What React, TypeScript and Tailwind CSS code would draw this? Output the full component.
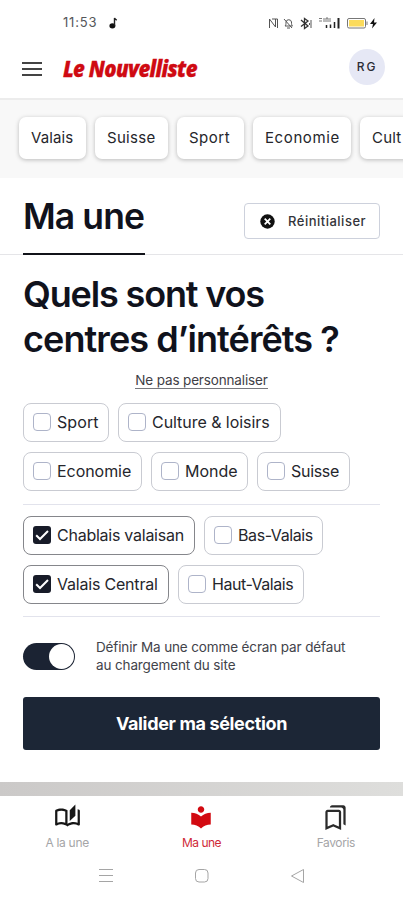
import React from 'react';
import clsx from 'clsx';
import { MdOutlineAutoStories, MdLocalLibrary, MdOutlineBookmarks } from 'react-icons/md';

interface Category {
  label: string;
  width: string;
  text: string;
}

interface TopicProps extends Category {
  checked?: boolean;
}

const categories: Category[] = [
  { label: 'Valais', width: 'w-[67px]', text: 'tracking-[0.1px]' },
  { label: 'Suisse', width: 'w-[73px]', text: 'tracking-[0.3px]' },
  { label: 'Sport', width: 'w-[67px]', text: 'tracking-[0.5px]' },
  { label: 'Economie', width: 'w-[98px]', text: 'tracking-[0.6px]' },
  { label: 'Cult', width: 'w-[56px]', text: 'tracking-[0.2px]' },
];

const topics: TopicProps[][] = [
  [
    { label: 'Sport', width: 'w-[86px]', text: 'tracking-[0.1px]' },
    { label: 'Culture & loisirs', width: 'w-[163px]', text: 'tracking-[-0.05px]' },
  ],
  [
    { label: 'Economie', width: 'w-[119px]', text: 'tracking-[-0.05px]' },
    { label: 'Monde', width: 'w-[97px]', text: '' },
    { label: 'Suisse', width: 'w-[93px]', text: 'tracking-[-0.3px]' },
  ],
];

const regions: TopicProps[][] = [
  [
    { label: 'Chablais valaisan', width: 'w-[172px]', text: 'tracking-[-0.25px]', checked: true },
    { label: 'Bas-Valais', width: 'w-[119px]', text: 'tracking-[-0.4px]' },
  ],
  [
    { label: 'Valais Central', width: 'w-[146px]', text: 'tracking-[-0.2px]', checked: true },
    { label: 'Haut-Valais', width: 'w-[126px]', text: 'tracking-[-0.45px]' },
  ],
];

const Topic: React.FC<TopicProps> = ({ label, width, text, checked = false }) => (
  <button
    className={clsx(
      'flex h-[39px] shrink-0 items-center gap-[6px] rounded-[8px] border pb-px pl-[9px] text-[16px] whitespace-nowrap text-[#25262c]',
      checked ? 'border-[#85868b]' : 'border-[#c9cbd2]',
      width,
    )}
  >
    {checked ? (
      <svg className="h-[18px] w-[18px] shrink-0" viewBox="0 0 18 18">
        <rect width="18" height="18" rx="3" fill="#171b28" />
        <path d="M3.2 9.300 7 13 15 5" fill="none" stroke="#fff" strokeWidth="2" />
      </svg>
    ) : (
      <span className="h-[18px] w-[18px] shrink-0 rounded-[4px] border border-[#aeb4c9] bg-white" />
    )}
    <span className={text}>{label}</span>
  </button>
);

const TopicRows: React.FC<{ rows: TopicProps[][] }> = ({ rows }) => (
  <div className="flex flex-col gap-[10px]">
    {rows.map((row, index) => (
      <div key={index} className="flex gap-[9px]">
        {row.map((topic) => (
          <Topic key={topic.label} {...topic} />
        ))}
      </div>
    ))}
  </div>
);

const StatusBar: React.FC = () => (
  <div className="flex h-[46px] items-center justify-between pr-[25px] pl-[63px]">
    <div className="flex items-center gap-[11px] text-[13px] text-[#55565a]">
      <span className="w-[35px] tracking-[0.8px] whitespace-nowrap">11:53</span>
      <svg width="9" height="12" viewBox="0 0 9 12">
        <ellipse cx="3.4" cy="8.8" rx="3" ry="2.6" fill="#111" />
        <path d="M5.500 8.800V1c.4 1.400 1.400 1.700 2.300 2.200" fill="none" stroke="#222" strokeWidth="1.4" />
      </svg>
    </div>
    <svg width="110" height="14" viewBox="268 16 110 14" fill="none" stroke="#555" strokeWidth="1">
      {/* nfc */}
      <path d="M269.500 28v-9l6 8v-8M272 19h5.500v9" />
      {/* cloche */}
      <path d="M285 26c1-1 1-2 1-4a2.800 2.800 0 0 1 5.500 0c0 2 0 3 1 4zM287 28h3M284 19l8 9" />
      {/* bluetooth */}
      <path d="m301 20 7 6-3.500 2.500v-10L308 21l-7 5.500" strokeWidth="1.300" stroke="#333" />
      <path d="M311 20v8M309.500 23v2" />
      <path d="M319 18.500h3M319 21h3M324 18v4M326 22v-4h2v4M330 18v4" strokeWidth=".8" />
      <path d="M326.500 25v3M330.500 24.500v3.500M334.500 22v6" stroke="#222" strokeWidth="1.500" />
      <path d="M338.500 18v10.500" stroke="#222" strokeWidth="2" />
      {/* batterie */}
      <rect x="347.500" y="18.500" width="18" height="9.500" rx="1.500" stroke="#777" />
      <rect x="349" y="20" width="15" height="6.500" fill="#fbdb5c" stroke="none" />
      <path d="M367 21.500v3.500" stroke="#777" />
      <path d="m374.500 18-4.500 6h3l-1 4.500 5-6h-3z" fill="#111" stroke="none" />
    </svg>
  </div>
);

const BottomNav: React.FC = () => (
  <nav className="grid h-[62px] grid-cols-3 bg-white text-center text-[12px] leading-[16px] text-[#a5a5a7]">
    <div className="flex flex-col items-center pt-[8px]">
      <MdOutlineAutoStories className="h-[27px] w-[27px] text-[#161616]" />
      <span className="mt-[4px] tracking-[-0.3px]">A la une</span>
    </div>
    <div className="flex flex-col items-center pt-[8px] text-[#cf2a38]">
      <MdLocalLibrary className="h-[26px] w-[26px] text-[#d20a11]" />
      <span className="mt-[5px] tracking-[-0.5px]">Ma une</span>
    </div>
    <div className="flex flex-col items-center pt-[8px]">
      <MdOutlineBookmarks className="h-[27px] w-[27px] text-[#2a2a2a]" />
      <span className="mt-[4px] tracking-[-0.4px]">Favoris</span>
    </div>
  </nav>
);

const SystemBar: React.FC = () => (
  <div className="flex h-[42px] items-start justify-between bg-white px-[97px] pt-[9px]">
    <svg width="17" height="17" viewBox="0 0 17 17" stroke="#a5a5a5">
      <path d="M2 2.500h14M2 8.500h14M2 14.500h14" />
    </svg>
    <svg width="17" height="17" viewBox="0 0 17 17" fill="none" stroke="#a5a5a5">
      <rect x="2.500" y="2.500" width="12.500" height="12.500" rx="3.500" />
    </svg>
    <svg width="17" height="17" viewBox="0 0 17 17" fill="none" stroke="#a5a5a5">
      <path d="M14.500 2.500v13L2.500 9z" strokeLinejoin="round" />
    </svg>
  </div>
);

export default function App() {
  return (
    <div className="flex h-[900px] w-[403px] flex-col overflow-hidden bg-white font-['Inter',sans-serif] text-[#10121c]">
      <StatusBar />

      <header className="flex h-[54px] shrink-0 items-center border-b-2 border-[#ececec] pr-[18px] pl-[22px]">
        <svg width="20" height="16" viewBox="0 0 20 16" className="mt-[-6px]" stroke="#444" strokeWidth="2">
          <path d="M0 2h20M0 8h20M0 14h20" />
        </svg>
        <div className="mt-[-8px] ml-[21px] w-[134px]">
          <span className="inline-block origin-left scale-x-[0.87] font-['Open_Sans',sans-serif] text-[23.5px] leading-[30px] font-extrabold tracking-[-0.8px] whitespace-nowrap text-[#cf0a12] italic [-webkit-text-stroke:0.3px_#cf0a12]">
            Le Nouvelliste
          </span>
        </div>
        <div className="mt-[-10px] ml-auto flex h-[36px] w-[36px] items-center justify-center rounded-full bg-[#e6e8f5] text-[12px] font-medium tracking-[2px] text-[#2b2c35]">
          RG
        </div>
      </header>

      <div className="flex h-[78px] shrink-0 gap-[9px] overflow-hidden bg-[#f8f8f8] pt-[17px] pl-[19px]">
        {categories.map((category) => (
          <button
            key={category.label}
            className={clsx(
              'flex h-[42px] shrink-0 items-center rounded-[7px] bg-white pt-px pl-[12px] text-[15px] whitespace-nowrap text-[#25262b] shadow-[0_1px_4px_rgba(0,0,0,0.25)] last:rounded-r-none',
              category.width,
            )}
          >
            <span className={category.text}>{category.label}</span>
          </button>
        ))}
      </div>

      <div className="flex h-[77px] shrink-0 justify-between border-b border-[#e5e5e8] pr-[23px] pl-[23px]">
        <h1 className="mb-[-1px] w-[122px] border-b-2 border-[#111319] pt-[17px] text-[35.5px] leading-[44px] font-semibold tracking-[-0.9px] whitespace-nowrap">
          Ma une
        </h1>
        <button className="mt-[25px] flex h-[36px] w-[136px] items-center rounded-[4px] border border-[#cdd1dc] pl-[15px] text-[13px] font-medium text-[#33343a]">
          <svg width="15" height="15" viewBox="0 0 15 15" className="mr-[13px] shrink-0">
            <circle cx="7.500" cy="7.500" r="7.200" fill="#111" />
            <path d="m4.700 4.700 5.600 5.600m0-5.600-5.600 5.600" stroke="#fff" strokeWidth="1.800" />
          </svg>
          <span className="pt-px tracking-[0.5px]">Réinitialiser</span>
        </button>
      </div>

      <main className="flex h-[527px] shrink-0 flex-col px-[23px] pt-[17px]">
        <h2 className="text-[36px] leading-[45px] font-semibold whitespace-nowrap">
          <span className="block tracking-[-1.15px]">Quels sont vos</span>
          <span className="block tracking-[-0.92px]">centres d’intérêts ?</span>
        </h2>
        <div className="mt-[9px] flex h-[32px] justify-center">
          <a className="h-[18px] border-b border-[#77787d] pt-px text-[13.5px] leading-[17px] tracking-[-0.15px] whitespace-nowrap text-[#3f4046]">
            Ne pas personnaliser
          </a>
        </div>
        <TopicRows rows={topics} />
        <hr className="mt-[13px] mb-[11px] border-[#e2e3ec]" />
        <TopicRows rows={regions} />
        <hr className="mt-[12px] border-[#e2e3ec]" />

        <div className="mt-[21px] flex items-center gap-[21px]">
          <div className="flex h-[27px] w-[52px] shrink-0 justify-end rounded-full bg-[#1b2333] p-px">
            <span className="h-[25px] w-[25px] rounded-full bg-white" />
          </div>
          <p className="text-[13.5px] leading-[18px] tracking-[-0.13px] whitespace-nowrap text-[#42434a]">
            Définir Ma une comme écran par défaut
            <br />
            au chargement du site
          </p>
        </div>

        <button className="mt-[23px] h-[53px] shrink-0 rounded-[3px] bg-[#1c2636] text-[18px] font-bold tracking-[-0.35px] text-white">
          Valider ma sélection
        </button>
      </main>

      <div className="h-[14px] shrink-0 bg-linear-to-r from-[#cbc9c8] to-[#dededc]" />
      <BottomNav />
      <SystemBar />
    </div>
  );
}
